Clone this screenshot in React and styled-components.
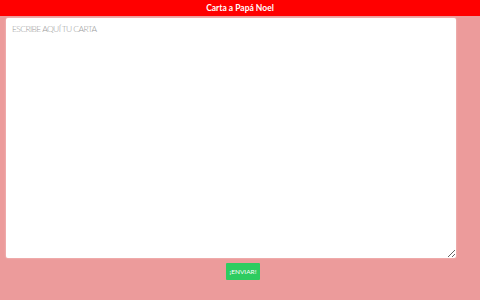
import React from "react";
import styled, { createGlobalStyle } from "styled-components";

const Global = createGlobalStyle`
  html, body { margin: 0; padding: 0; height: 100%; }
  body { background: #ec9b9b; font-family: Lato, "Liberation Sans", sans-serif; }
  #root { height: 100%; }
`;

const Page = styled.div`
  display: flex;
  flex-direction: column;
  height: 300px;
`;

const Header = styled.header`
  height: 16px;
  background: #ff0000;
  color: #fff;
  font-family: Lato, "Liberation Sans", sans-serif;
  font-weight: 700;
  font-size: 8.5px;
  display: flex;
  align-items: center;
  justify-content: center;
`;

const Body = styled.main`
  display: flex;
  flex-direction: column;
  align-items: center;
  padding: 2px 0 0 6px;
`;

const Letter = styled.textarea`
  align-self: flex-start;
  width: 450px;
  height: 240px;
  box-sizing: border-box;
  border: none;
  border-radius: 2px;
  box-shadow: 0 0 2px rgba(255, 255, 255, 0.6);
  padding: 6px 6px;
  font-family: Lato, "Liberation Sans", sans-serif;
  font-size: 8.5px;
  font-weight: 300;
  letter-spacing: -0.6px;
  color: #555;
  outline: none;
  resize: both;
  &::placeholder { color: #9a9a9a; text-transform: uppercase; }
`;

const Send = styled.button`
  margin-top: 5px;
  width: 34px;
  height: 17px;
  padding: 0;
  border: none;
  border-radius: 1px;
  background: #2ecc60;
  color: #fff;
  font-family: Lato, "Liberation Sans", sans-serif;
  font-size: 6.5px;
  cursor: pointer;
`;

export default function App() {
  return (
    <>
      <Global />
      <Page>
        <Header>Carta a Papá Noel</Header>
        <Body>
          <Letter placeholder="Escribe aquí tu carta" autoFocus />
          <Send>¡ENVIAR!</Send>
        </Body>
      </Page>
    </>
  );
}
